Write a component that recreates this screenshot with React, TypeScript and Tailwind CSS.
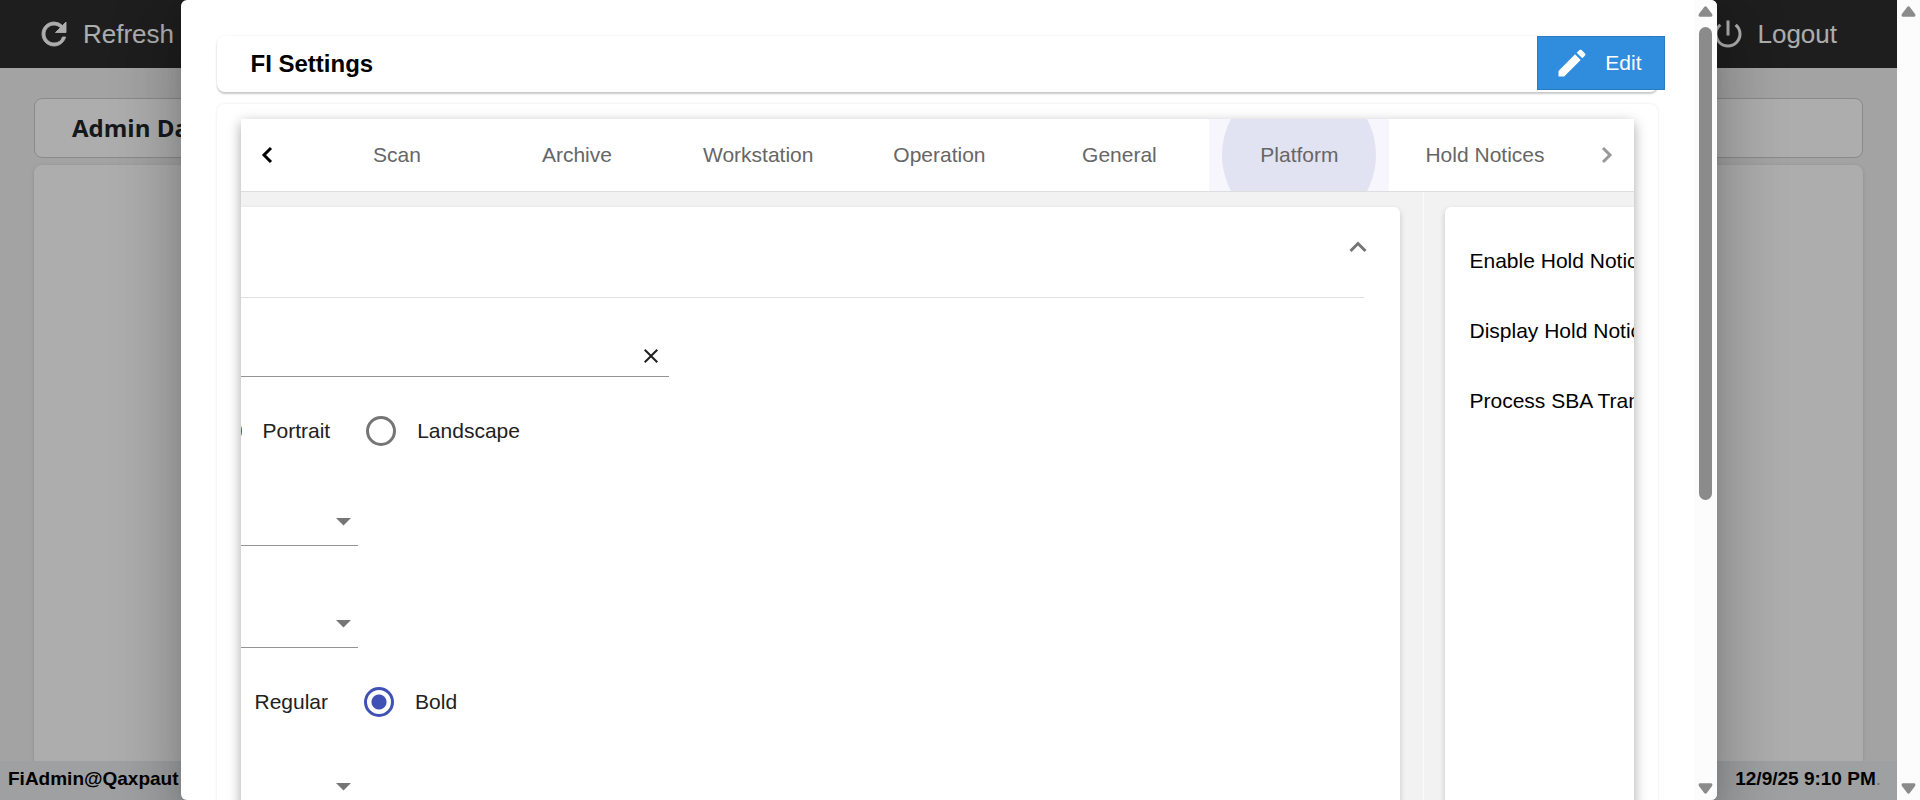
import { useState } from "react";
import { MdClose, MdEdit, MdPowerSettingsNew } from "react-icons/md";

const TABS = ["Scan", "Archive", "Workstation", "Operation", "General", "Platform", "Hold Notices"];

const HOLD_NOTICE_SETTINGS = [
  "Enable Hold Notices",
  "Display Hold Notices",
  "Process SBA Transactions",
];

function RefreshIcon() {
  return (
    <svg viewBox="0 0 24 24" className="h-9 w-9 fill-current stroke-current stroke-[0.6]">
      <path d="M17.65 6.35A7.96 7.96 0 0 0 12 4c-4.42 0-7.99 3.58-7.99 8s3.57 8 7.99 8c3.73 0 6.84-2.55 7.73-6h-2.08A5.99 5.99 0 0 1 12 18c-3.31 0-6-2.69-6-6s2.69-6 6-6c1.66 0 3.14.69 4.22 1.78L13 11h7V4l-2.35 2.35z" />
    </svg>
  );
}

function ScrollArrow({ down = false }: { down?: boolean }) {
  return (
    <svg viewBox="0 0 15 11" className={`h-[11px] w-[15px] shrink-0 fill-[#8b8b8b] ${down ? "rotate-180" : ""}`}>
      <path d="M6.2.9 Q7.5-.5 8.8.9 L14.1 8 Q15.1 10.8 12.8 10.8 H2.2 Q-.1 10.8.9 8Z" />
    </svg>
  );
}

function ScrollTrack({ thumb = false }: { thumb?: boolean }) {
  return (
    <div aria-hidden="true" className="flex w-[23px] shrink-0 flex-col items-center justify-between bg-[#fcfcfc] pt-1.5 pb-1.5">
      <ScrollArrow />
      {thumb && (
        <div className="mt-2.5 flex-1">
          <div className="h-5/8 w-[13px] rounded-full bg-[#8b8b8b]" />
        </div>
      )}
      <ScrollArrow down />
    </div>
  );
}

function Chevron({ right = false }: { right?: boolean }) {
  return (
    <svg viewBox="0 0 12 18" className="h-[18px] w-3 fill-none stroke-current stroke-[3]">
      <path d={right ? "M2 2 L9 9 L2 16" : "M10 2 L3 9 L10 16"} />
    </svg>
  );
}

type RadioProps = {
  name: string;
  label: string;
  checked: boolean;
  onChange: () => void;
};

function Radio({ name, label, checked, onChange }: RadioProps) {
  return (
    <label className="flex items-center gap-[21px]">
      <input
        type="radio"
        name={name}
        checked={checked}
        onChange={onChange}
        className="h-[30px] w-[30px] appearance-none rounded-full border-[3px] border-[#757575] bg-white checked:border-[#3f51b5] checked:bg-[radial-gradient(circle,#3f51b5_7px,transparent_8px)]"
      />
      {label}
    </label>
  );
}

function SelectField({ label }: { label: string }) {
  return (
    <div className="relative flex h-12 w-[165px] items-center border-b border-[#949494]">
      <select aria-label={label} className="h-full w-full appearance-none bg-transparent outline-none">
        <option value="" />
      </select>
      <svg viewBox="0 0 15 8" className="pointer-events-none absolute right-[7px] h-2 w-[15px] fill-[#757575]">
        <path d="M0 0 H15 L7.5 7.5Z" />
      </svg>
    </div>
  );
}

function PlatformPane() {
  const [orientation, setOrientation] = useState("Portrait");
  const [weight, setWeight] = useState("Bold");

  return (
    <section className="flex min-w-0 flex-1 border-r border-[#fafafa] pt-[15px] pr-[23px]">
      <div className="-ml-12 flex-1 rounded-t-md bg-white text-[#212121] shadow-[0_3px_6px_rgba(0,0,0,0.18)]">
        <div className="flex h-[90px] items-center justify-end pr-8 pb-2.5">
          <button type="button" aria-label="Collapse section" className="text-[#757575]">
            <svg viewBox="0 0 20 12" className="h-3 w-5 fill-none stroke-current stroke-[3]">
              <path d="M2.5 10 L10 2.5 L17.5 10" />
            </svg>
          </button>
        </div>
        <hr className="mr-9 border-[#e0e0e0]" />
        <form className="flex flex-col">
          <div className="mt-[38px] flex h-[41px] w-[476px] items-center border-b border-[#949494] pr-1.5">
            <input aria-label="Name" className="min-w-0 flex-1 bg-transparent outline-none" />
            <button type="button" aria-label="Clear">
              <MdClose className="h-6 w-6" />
            </button>
          </div>
          <div className="mt-[39px] flex gap-9 pl-[19px]">
            {["Portrait", "Landscape"].map((item) => (
              <Radio key={item} name="orientation" label={item} checked={orientation === item} onChange={() => setOrientation(item)} />
            ))}
          </div>
          <div className="mt-[52px] flex flex-col gap-[54px]">
            <SelectField label="Font" />
            <SelectField label="Font size" />
          </div>
          <div className="mt-[39px] flex gap-9 pl-[11px]">
            {["Regular", "Bold"].map((item) => (
              <Radio key={item} name="weight" label={item} checked={weight === item} onChange={() => setWeight(item)} />
            ))}
          </div>
          <div className="mt-[46px]">
            <SelectField label="Alignment" />
          </div>
        </form>
      </div>
    </section>
  );
}

function HoldNoticesPane() {
  return (
    <section className="flex w-[210px] shrink-0 pt-[15px] pl-[21px]">
      <ul className="flex w-[600px] shrink-0 flex-col gap-[46px] rounded-t-md bg-white px-[25px] pt-[42px] whitespace-nowrap text-black shadow-[0_3px_6px_rgba(0,0,0,0.18)]">
        {HOLD_NOTICE_SETTINGS.map((item) => (
          <li key={item}>{item}</li>
        ))}
      </ul>
    </section>
  );
}

function SettingsDialog() {
  const [active, setActive] = useState("Platform");

  return (
    <div
      role="dialog"
      aria-label="FI Settings"
      className="flex h-full w-[80vw] overflow-hidden rounded-md bg-white shadow-[0_16px_22px_-10px_rgba(0,0,0,0.2),0_36px_57px_4px_rgba(0,0,0,0.14),0_13px_69px_12px_rgba(0,0,0,0.12)]"
    >
      <div className="flex min-w-0 flex-1 flex-col overflow-hidden px-9 pt-9">
        <header className="flex h-14 shrink-0 items-start justify-between rounded-lg pl-[34px] shadow-[0_2px_2px_rgba(0,0,0,0.2),0_0_3px_rgba(0,0,0,0.06)]">
          <h1 className="text-2xl leading-[56px] font-bold text-black">FI Settings</h1>
          <button
            type="button"
            className="-mr-[7px] flex h-[54px] items-center gap-[15px] border border-[#2a7bc0] bg-[#308cdd] pr-[22px] pl-4 text-[21px] text-white"
          >
            <MdEdit className="h-9 w-9" />
            Edit
          </button>
        </header>
        <div className="mt-3 flex flex-1 flex-col rounded-t-lg px-6 pt-[15px] shadow-[0_0_3px_rgba(0,0,0,0.1)]">
          <div className="flex flex-1 flex-col bg-[#f2f2f2] text-[21px] leading-6 shadow-[0_4px_12px_rgba(0,0,0,0.35)]">
            <div className="flex h-[73px] shrink-0 border-b border-[#dedede] bg-white">
              <button type="button" aria-label="Previous tabs" className="flex w-[53px] items-center justify-center text-black">
                <Chevron />
              </button>
              <div role="tablist" className="flex flex-1 justify-end overflow-hidden">
                {TABS.map((tab) => (
                  <button
                    key={tab}
                    type="button"
                    role="tab"
                    aria-selected={active === tab}
                    onClick={() => setActive(tab)}
                    className={`relative flex min-w-[180px] shrink-0 items-center justify-center overflow-hidden px-9 text-[#666] ${
                      active === tab ? "bg-[#f7f6fc]" : ""
                    }`}
                  >
                    {active === tab && (
                      <span className="absolute top-1/2 left-1/2 h-[154px] w-[154px] -translate-1/2 rounded-full bg-[#e2e3f2]" />
                    )}
                    <span className="relative">{tab}</span>
                  </button>
                ))}
              </div>
              <button type="button" aria-label="Next tabs" className="flex w-[53px] items-center justify-center text-[#999]">
                <Chevron right />
              </button>
            </div>
            <div className="flex flex-1 overflow-hidden">
              <PlatformPane />
              <HoldNoticesPane />
            </div>
          </div>
        </div>
      </div>
      <ScrollTrack thumb />
    </div>
  );
}

export default function App() {
  return (
    <div className="flex h-screen overflow-hidden font-['Liberation_Sans',Arial,sans-serif]">
      <div className="relative flex min-w-0 flex-1 flex-col bg-[#f0f0f0]">
        <nav className="flex h-[68px] shrink-0 items-center justify-between bg-[#2d2d2d] pr-[60px] pl-9 text-[26px] text-white">
          <button type="button" className="flex items-center gap-[11px]">
            <RefreshIcon />
            Refresh
          </button>
          <button type="button" className="flex items-center gap-[11px]">
            <MdPowerSettingsNew className="h-9 w-9" />
            Logout
          </button>
        </nav>
        <main className="flex flex-1 flex-col gap-[7px] px-[34px] pt-[30px]">
          <h2 className="flex h-[60px] items-center rounded-lg border border-[#ccc] bg-white pl-[37px] font-['Open_Sans',sans-serif] text-2xl font-bold text-[#212529]">
            Admin Dashboard
          </h2>
          <div className="flex-1 rounded-t-lg bg-white shadow-[0_1px_4px_rgba(0,0,0,0.12)]" />
        </main>
        <footer className="relative flex h-[39px] shrink-0 items-center justify-between bg-[#e9ecef] pr-4 pb-0.5 pl-2 text-[19px] font-bold text-black">
          <span>FiAdmin@Qaxpaut</span>
          <span>
            12/9/25 9:10 PM<span className="font-normal text-[#aaa]">.</span>
          </span>
        </footer>
        <div className="absolute inset-0 flex justify-center overflow-hidden bg-black/32">
          <SettingsDialog />
        </div>
      </div>
      <ScrollTrack />
    </div>
  );
}
